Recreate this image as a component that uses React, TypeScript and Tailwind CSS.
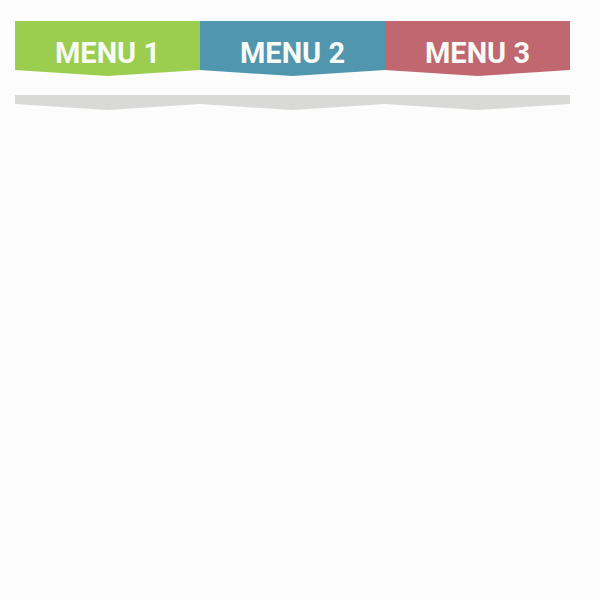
import React from 'react';

const MENUS = [
  { id: 'menu-1', label: 'MENU 1', color: 'bg-[#9bcd4f]' },
  { id: 'menu-2', label: 'MENU 2', color: 'bg-[#4f96ae]' },
  { id: 'menu-3', label: 'MENU 3', color: 'bg-[#c0676f]' },
];

const App: React.FC = () => {
  return (
    <div className="min-h-[600px] w-full bg-[#fbfcfb] pt-[21px] pl-[15px]" style={{ fontFamily: 'Roboto, "Liberation Sans", sans-serif' }}>
      <nav className="w-[555px]">
        <ul className="flex">
          {MENUS.map((item) => (
            <li
              key={item.id}
              className={`flex-1 h-[55px] ${item.color} [clip-path:polygon(0_0,100%_0,100%_49px,50%_100%,0_49px)]`}
            >
              <a href="#" className="flex h-[49px] pt-[16px] items-center justify-center text-[29px] font-bold text-[#f7faf5]">
                {item.label}
              </a>
            </li>
          ))}
        </ul>
        <div className="mt-[19px] h-[15px] bg-[#d9dad8] [clip-path:polygon(0_0,100%_0,100%_9px,83.33%_100%,66.67%_9px,50%_100%,33.33%_9px,16.67%_100%,0_9px)]" />
      </nav>
    </div>
  );
};

export default App;
